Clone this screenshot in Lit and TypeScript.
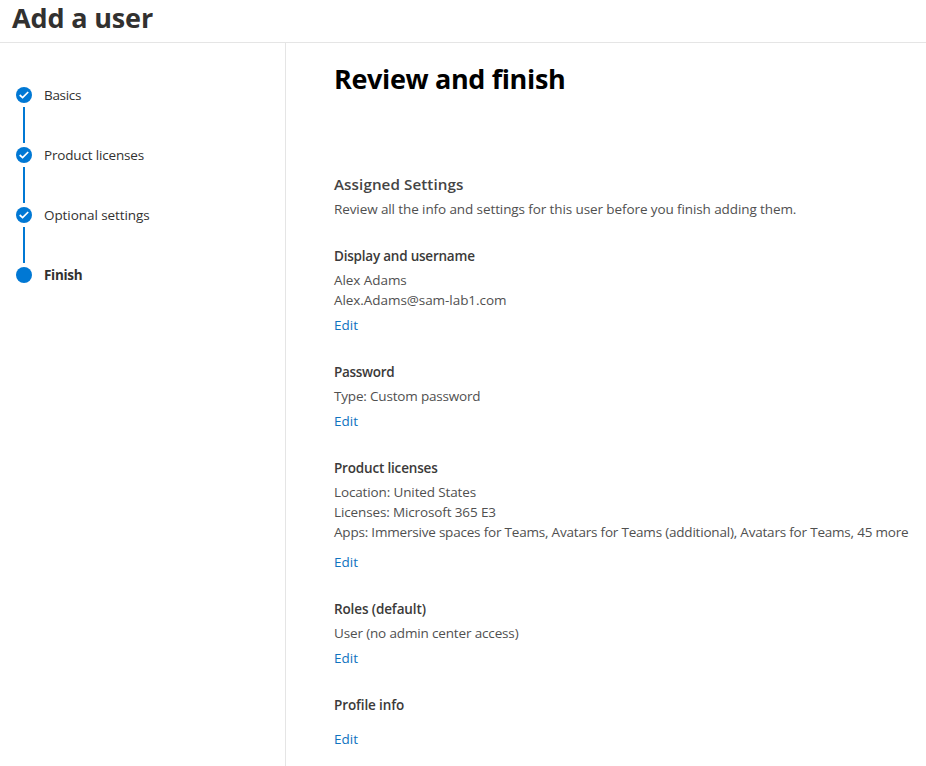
import { LitElement, html, css, svg, nothing } from "lit";
import { customElement } from "lit/decorators.js";

interface Section {
  title: string;
  kind: string;
  lines: string[];
}

const steps = [
  { label: "Basics", kind: "basics" },
  { label: "Product licenses", kind: "products" },
  { label: "Optional settings", kind: "optional" },
  { label: "Finish", kind: "current" },
];

const sections: Section[] = [
  { title: "Display and username", kind: "display", lines: ["Alex Adams", "Alex.Adams@sam-lab1.com"] },
  { title: "Password", kind: "password", lines: ["Type: Custom password"] },
  {
    title: "Product licenses",
    kind: "licenses",
    lines: [
      "Location: United States",
      "Licenses: Microsoft 365 E3",
      "Apps: Immersive spaces for Teams, Avatars for Teams (additional), Avatars for Teams, 45 more",
    ],
  },
  { title: "Roles (default)", kind: "roles", lines: ["User (no admin center access)"] },
  { title: "Profile info", kind: "profile", lines: [] },
];

@customElement("app-root")
export class AppRoot extends LitElement {
  static styles = css`
    :host {
      display: flex;
      flex-direction: column;
      height: 766px;
      overflow: hidden;
      background: #fff;
      color: #323130;
      font: 13.5px/20px "Open Sans", "Noto Sans", sans-serif;
      white-space: nowrap;
    }
    h1, h2, h3, h4, p, ol { margin: 0; padding: 0; }
    header {
      box-sizing: border-box;
      height: 43px;
      padding-left: 12px;
      border-bottom: 1px solid #e5e5e5;
    }
    h1 { font-size: 27px; line-height: 36px; font-weight: 700; letter-spacing: -0.15px; }
    .body { display: flex; flex: 1; min-height: 0; }
    nav {
      box-sizing: border-box;
      flex: 0 0 286px;
      padding: 42px 0 0 16px;
      border-right: 1px solid #e5e5e5;
    }
    ol { list-style: none; }
    .step { display: flex; gap: 12px; height: 60px; }
    .rail { display: flex; flex-direction: column; align-items: center; gap: 4px; width: 16px; padding-top: 2px; }
    .rail svg { display: block; }
    .line { width: 2px; height: 36px; background: #0078d4; }
    .basics { letter-spacing: -0.3px; }
    .products { letter-spacing: -0.17px; }
    .optional { letter-spacing: -0.07px; }
    .current { font-weight: 700; letter-spacing: -0.3px; }
    main { padding: 18px 0 0 48px; color: #505050; }
    h2 { font-size: 27px; line-height: 36px; color: #000; letter-spacing: -0.36px; }
    h3 { margin-top: 77px; font-size: 15.2px; line-height: 20px; font-weight: 600; color: #444; letter-spacing: 0.08px; }
    .intro { margin-top: 5px; letter-spacing: -0.1px; }
    section { margin-top: 27px; display: flex; flex-direction: column; align-items: flex-start; }
    h4 { font-size: 13.5px; font-weight: 600; color: #3b3a39; margin-bottom: 4px; letter-spacing: -0.12px; }
    .display h4 { letter-spacing: -0.22px; }
    .password h4 { letter-spacing: -0.3px; }
    .licenses h4 { letter-spacing: -0.18px; }
    .display p { letter-spacing: -0.06px; }
    .password p { letter-spacing: -0.18px; }
    .licenses p { letter-spacing: -0.13px; }
    .licenses p:nth-of-type(3) { letter-spacing: -0.2px; }
    .roles p { letter-spacing: -0.15px; }
    a { color: #0f73c0; text-decoration: none; margin-top: 5px; }
    .licenses a, .profile a { margin-top: 10px; }
  `;

  private marker(done: boolean) {
    return html`<svg width="16" height="16" viewBox="0 0 16 16">
      <circle cx="8" cy="8" r="8" fill="#0078d4"></circle>
      ${done
        ? svg`<path d="M3.7 8 L6.6 10.6 L12.2 5" fill="none" stroke="#fff" stroke-width="1.7"></path>`
        : nothing}
    </svg>`;
  }

  render() {
    const last = steps.length - 1;
    return html`
      <header><h1>Add a user</h1></header>
      <div class="body">
        <nav>
          <ol>
            ${steps.map(
              (s, i) => html`<li class="step">
                <div class="rail">${this.marker(i < last)}${i < last ? html`<div class="line"></div>` : nothing}</div>
                <span class=${s.kind}>${s.label}</span>
              </li>`
            )}
          </ol>
        </nav>
        <main>
          <h2>Review and finish</h2>
          <h3>Assigned Settings</h3>
          <p class="intro">Review all the info and settings for this user before you finish adding them.</p>
          ${sections.map(
            (s) => html`<section class=${s.kind}>
              <h4>${s.title}</h4>
              ${s.lines.map((l) => html`<p>${l}</p>`)}
              <a>Edit</a>
            </section>`
          )}
        </main>
      </div>
    `;
  }
}
